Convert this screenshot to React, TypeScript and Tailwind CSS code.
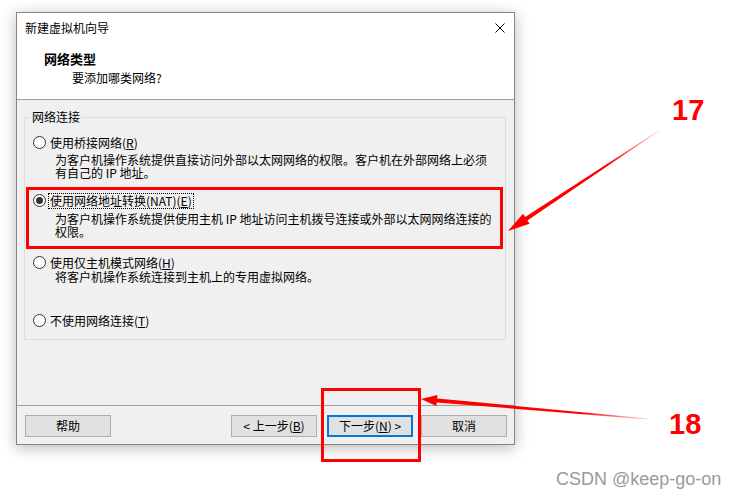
import React from "react";

function Radio({
  checked,
  focus,
  children,
}: {
  checked?: boolean;
  focus?: boolean;
  children: React.ReactNode;
}) {
  return (
    <div className="flex items-center h-[13px] ml-[8px]">
      <span className="w-[13px] h-[13px] rounded-full border border-[#333333] bg-white flex items-center justify-center shrink-0">
        {checked ? <span className="w-[7px] h-[7px] rounded-full bg-[#333333]" /> : null}
      </span>
      {focus ? (
        <span className="ml-[3px] px-[1px] leading-[13px] h-[14px] outline-1 outline-dotted outline-[#000000] whitespace-nowrap">
          {children}
        </span>
      ) : (
        <span className="ml-[4px] leading-[13px] whitespace-nowrap">{children}</span>
      )}
    </div>
  );
}

function Btn({ children, primary }: { children: React.ReactNode; primary?: boolean }) {
  return primary ? (
    <div className="w-[86px] h-[22px] border-2 border-[#0078d7] bg-[#e1e1e1] flex items-center justify-center leading-[14px]">
      {children}
    </div>
  ) : (
    <div className="w-[86px] h-[22px] border border-[#adadad] bg-[#e1e1e1] flex items-center justify-center leading-[14px]">
      {children}
    </div>
  );
}

export default function App() {
  return (
    <div className="relative w-[741px] h-[499px] bg-white overflow-hidden text-[12px] text-black font-['Noto_Sans_CJK_SC','Noto_Sans',sans-serif]">
      {/* dialog */}
      <div className="ml-[16px] mt-[12px] w-[499px] h-[433px] border border-[#858585] bg-[#f0f0f0] flex flex-col shadow-[0_3px_14px_rgba(0,0,0,0.28)]">
        {/* title bar */}
        <div className="h-[30px] bg-white flex items-center justify-between pl-[8px] pr-[9px] shrink-0">
          <span className="leading-[16px]">新建虚拟机向导</span>
          <svg width="10" height="10" viewBox="0 0 10 10">
            <path d="M0.5 0.5 L9.5 9.5 M9.5 0.5 L0.5 9.5" stroke="#000" strokeWidth="1" />
          </svg>
        </div>
        {/* header */}
        <div className="h-[56px] bg-white pt-[8px] shrink-0">
          <div className="pl-[27px] font-bold text-[13px] leading-[16px]">网络类型</div>
          <div className="pl-[55px] mt-[3px] leading-[16px]">要添加哪类网络?</div>
        </div>
        <div className="h-px bg-[#a0a0a0] shrink-0" />
        {/* body */}
        <div className="flex-1 flex flex-col">
          <fieldset className="mt-[9px] ml-[7px] mr-[8px] h-[231px] border border-[#dcdcdc] p-0 m-0">
            <legend className="ml-[5px] px-[2px] leading-[16px]">网络连接</legend>
            <div className="mt-[11px]">
              <Radio>
                使用桥接网络(<span className="underline">R</span>)
              </Radio>
            </div>
            <div className="mt-[4px] ml-[30px] leading-[13px]">
              <div>为客户机操作系统提供直接访问外部以太网网络的权限。客户机在外部网络上必须</div>
              <div>有自己的 IP 地址。</div>
            </div>
            <div className="mt-[15px]">
              <Radio checked focus>
                使用网络地址转换(NAT)(<span className="underline">E</span>)
              </Radio>
            </div>
            <div className="mt-[5px] ml-[30px] leading-[13px]">
              <div>为客户机操作系统提供使用主机 IP 地址访问主机拨号连接或外部以太网网络连接的</div>
              <div>权限。</div>
            </div>
            <div className="mt-[18px]">
              <Radio>
                使用仅主机模式网络(<span className="underline">H</span>)
              </Radio>
            </div>
            <div className="mt-[1px] ml-[30px] leading-[13px]">
              <div>将客户机操作系统连接到主机上的专用虚拟网络。</div>
            </div>
            <div className="mt-[31px]">
              <Radio>
                不使用网络连接(<span className="underline">T</span>)
              </Radio>
            </div>
          </fieldset>
          <div className="flex-1" />
        </div>
        <div className="h-px bg-[#a0a0a0] shrink-0" />
        {/* footer */}
        <div className="h-[38px] pt-[9px] pl-[8px] pr-[7px] flex items-start shrink-0">
          <Btn>帮助</Btn>
          <div className="flex-1" />
          <div className="flex gap-[10px]">
            <Btn>
              &lt; 上一步(<span className="underline">B</span>)
            </Btn>
            <Btn primary>
              下一步(<span className="underline">N</span>) &gt;
            </Btn>
          </div>
          <div className="ml-[8px]">
            <Btn>取消</Btn>
          </div>
        </div>
      </div>

      {/* annotations */}
      <div className="absolute left-[26px] top-[187px] w-[477px] h-[62px] border-[3px] border-[#ff0000] pointer-events-none" />
      <div className="absolute left-[321px] top-[388px] w-[100px] h-[74px] border-[3px] border-[#ff0000] pointer-events-none" />

      <svg className="absolute left-0 top-0 pointer-events-none" width="741" height="499" viewBox="0 0 741 499">
        <defs>
          <linearGradient id="g1" gradientUnits="userSpaceOnUse" x1="660" y1="130" x2="508" y2="231">
            <stop offset="0" stopColor="#ff0000" stopOpacity="0.15" />
            <stop offset="0.35" stopColor="#ff0000" stopOpacity="1" />
            <stop offset="1" stopColor="#ff0000" stopOpacity="1" />
          </linearGradient>
          <linearGradient id="g2" gradientUnits="userSpaceOnUse" x1="648" y1="419" x2="421" y2="399">
            <stop offset="0" stopColor="#ff0000" stopOpacity="0.15" />
            <stop offset="0.3" stopColor="#ff0000" stopOpacity="1" />
            <stop offset="1" stopColor="#ff0000" stopOpacity="1" />
          </linearGradient>
        </defs>
        <polygon
          fill="url(#g1)"
          points="660.2,130.3 527.4,220.5 529.6,223.8 508,231 523,213.8 525.2,217.1 659.8,129.7"
        />
        <polygon
          fill="url(#g2)"
          points="648,419.5 436.7,402.4 436.4,405.9 421,399 437.4,394.9 437.1,398.4 648,418.5"
        />
      </svg>

      <div className="absolute left-[672px] top-[96px] text-[29px] leading-[29px] font-bold text-[#ff0000] font-['Liberation_Sans',Arial,sans-serif]">
        17
      </div>
      <div className="absolute left-[669px] top-[410px] text-[29px] leading-[29px] font-bold text-[#ff0000] font-['Liberation_Sans',Arial,sans-serif]">
        18
      </div>
      <div className="absolute left-[556px] top-[470px] text-[18px] leading-[18px] text-[#9a9a9a] font-['Liberation_Sans',Arial,sans-serif]">
        CSDN @keep-go-on
      </div>
    </div>
  );
}
